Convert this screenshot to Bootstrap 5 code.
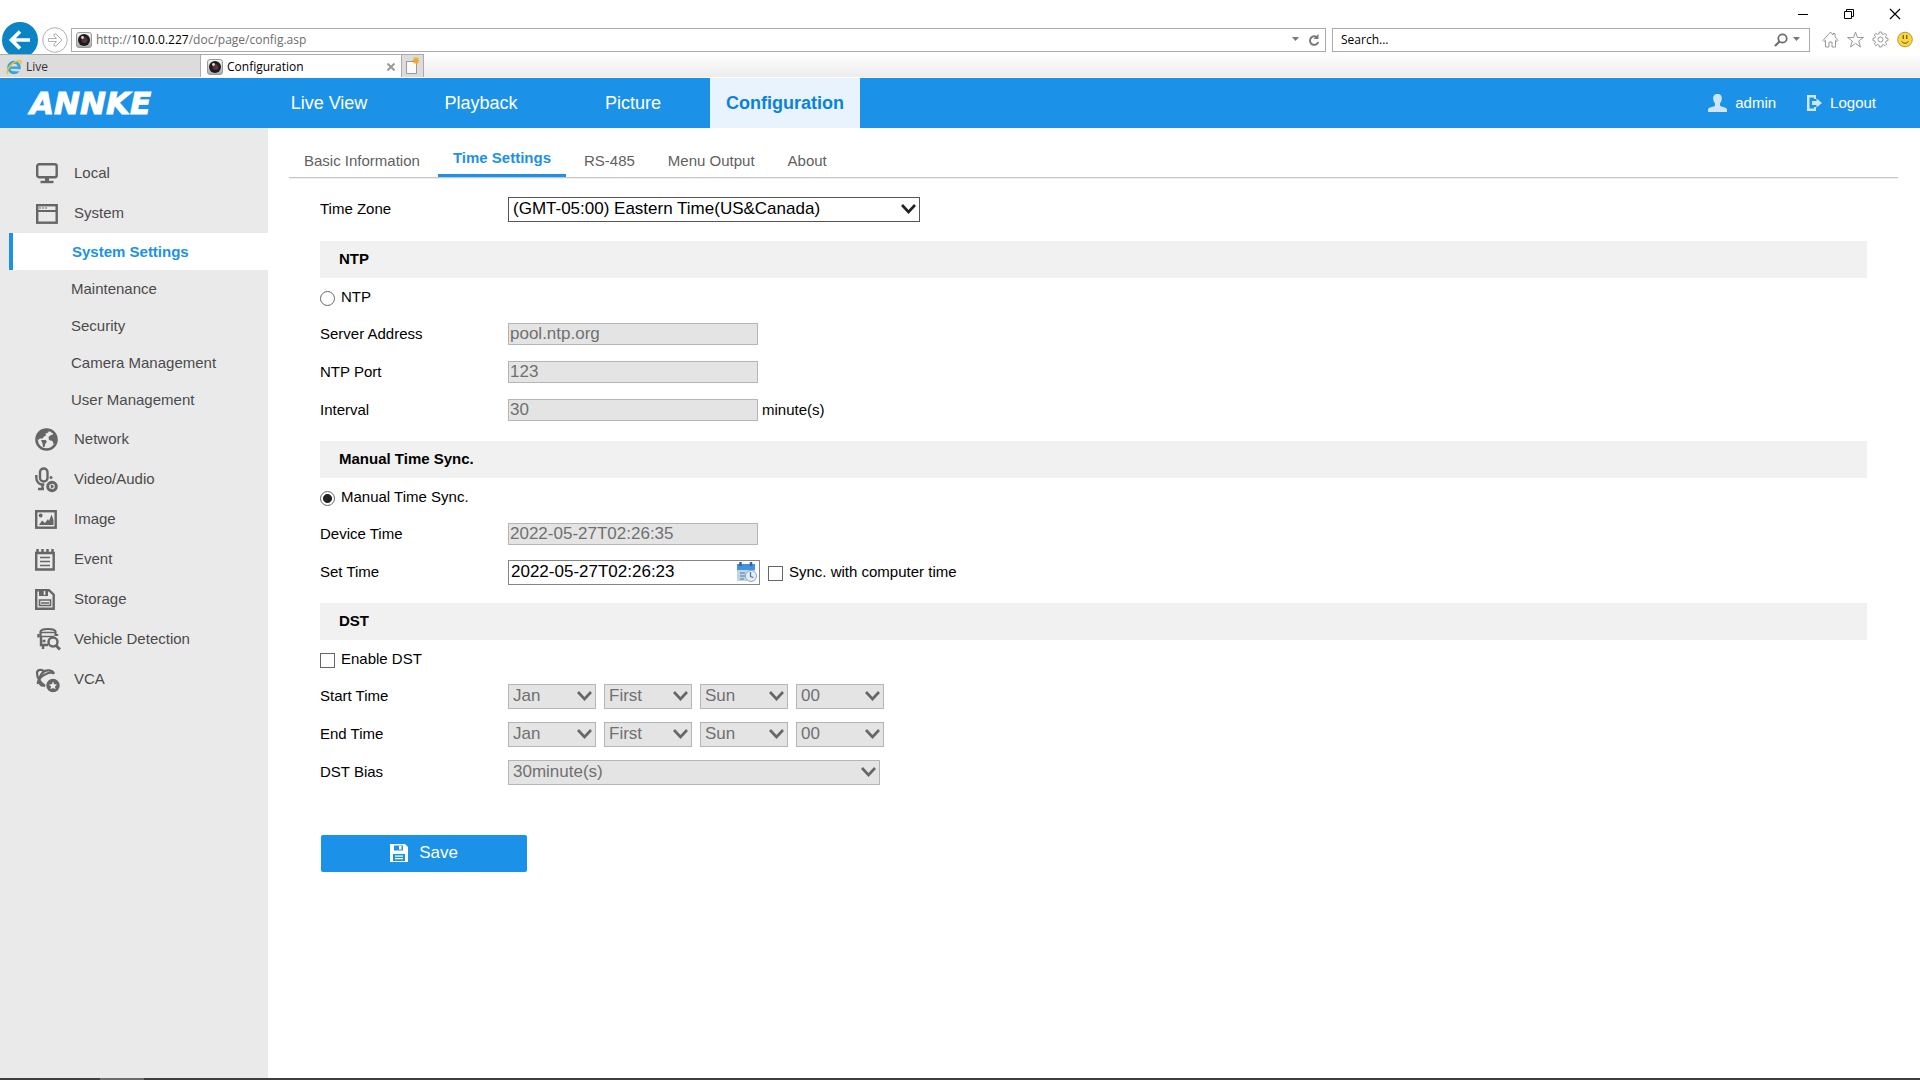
<!DOCTYPE html>
<html lang="en">
<head>
<meta charset="utf-8">
<meta name="viewport" content="width=device-width, initial-scale=1">
<title>Configuration</title>
<link href="https://cdn.jsdelivr.net/npm/bootstrap@5.3.0/dist/css/bootstrap.min.css" rel="stylesheet">
<style>
  :root { --brand: #1b92e8; --ui: "Open Sans", "Noto Sans", sans-serif; }
  body { font: 15px/20px "Liberation Sans", Arial, sans-serif; color: #000; background: #fff; min-height: 100vh; }
  a { text-decoration: none; color: inherit; }
  svg { display: block; flex: none; }
  button { border: 0; background: none; padding: 0; color: inherit; }

  /* browser frame */
  .browser { font: 12px/16px var(--ui); }
  .title-row { height: 24px; padding: 4px 19px 0 0; gap: 34px; }
  .tool-row { height: 30px; padding: 1px 7px 0 2px; }
  .back-btn { width: 36px; height: 36px; margin: -3px 0; }
  .fwd-btn { margin: 0 3px 0 4px; }
  .url-box, .search-box { height: 24px; border: 1px solid #ababab; }
  .url-box { flex: 1; padding: 0 5px 0 4px; color: #6d6d6d; margin-right: 6px; }
  .search-box { width: 478px; padding: 0 8px; margin-right: 12px; }
  .search-box input { border: 0; outline: 0; padding: 0; color: #000; }
  .search-box input::placeholder { color: #000; opacity: 1; }
  .tab-row { height: 24px; border-bottom: 1px solid #fff; background: linear-gradient(#fff, #ececec); z-index: 1; }
  .browser-tab { width: 201px; border: 1px solid #ababab; border-width: 1px 1px 0 0; background: #dcdcdc; color: #333; padding: 2px 6px 0; gap: 4px; }
  .browser-tab.current { background: #fff; color: #000; }
  .new-tab { width: 22px; border: 1px solid #ababab; border-width: 1px 1px 0 0; background: #dcdcdc; }

  /* product header */
  .top-bar { background: var(--brand); height: 50px; color: #fff; }
  .brand-box { width: 254px; padding-left: 30px; }
  .brand-name { font: italic bold 31px/50px "DejaVu Sans", sans-serif; -webkit-text-stroke: 1px #fff; }
  .main-nav { gap: 2px; }
  .main-nav a { width: 150px; line-height: 50px; font-size: 18px; text-align: center; }
  .main-nav a.current { background: #e8f3fd; color: #0a82dc; font-weight: bold; }
  .user-links { padding-right: 44px; gap: 31px; }
  .user-links a { gap: 8px; }

  /* side menu */
  .side { width: 268px; background: #eaeaea; padding-top: 25px; color: #4b4b4b; }
  .side-link { height: 40px; padding-left: 35px; gap: 13px; }
  .side-link svg { margin-top: 2px; color: #666; }
  .sub-menu { padding-bottom: 1px; }
  .sub-menu a { height: 37px; line-height: 37px; margin-left: 9px; padding-left: 58px; border-left: 4px solid transparent; }
  .sub-menu a.current { background: #fff; border-color: var(--brand); color: var(--brand); font-weight: bold; padding-left: 59px; }

  /* page */
  .page { padding: 0 22px 0 21px; }
  .page-tabs { height: 50px; border-bottom: 1px solid #c8c8c8; box-shadow: 0 1px #eee; padding-top: 11px; gap: 3px; color: #5f5f5f; }
  .page-tabs a { padding: 12px 15px 0; height: 38px; border-bottom: 3px solid transparent; }
  .page-tabs a.current { color: var(--brand); font-weight: bold; padding-top: 9px; border-color: var(--brand); }
  .settings { padding: 12px 31px 0; }
  .field-row { height: 38px; }
  .field-row > label:first-child { width: 188px; }
  .section-head { margin: 12px 0 0; height: 37px; background: #f1f1f1; font: bold 15px/36px "Liberation Sans", Arial, sans-serif; padding-left: 19px; }
  .field-row:first-child + .section-head { margin-top: 13px; }
  .pick-row { height: 37px; gap: 6px; }
  .pick { appearance: none; width: 15px; height: 15px; margin: 3px 0 0; border: 1px solid #666; background: #fff; flex: none; }
  .pick[type=radio] { border-radius: 50%; }
  .pick[type=radio]:checked { background: radial-gradient(circle, #222 4px, #fff 5px); }
  .txt, .sel, .time-box { font: 17px/20px "Liberation Sans", Arial, sans-serif; color: #000; border: 1px solid #858585; border-radius: 0; background: #fff; }
  .txt { width: 250px; height: 22px; padding: 0 1px; }
  .txt:disabled, .sel:disabled { background-color: #e4e4e4; color: #707070; border-color: #b5b5b5; opacity: 1; }
  .time-box { width: 252px; height: 25px; padding: 0 2px; }
  .time-box input { border: 0; outline: 0; padding: 0; min-width: 0; }
  .sel { appearance: none; height: 25px; padding: 0 22px 0 4px; background-repeat: no-repeat; background-position: right 3px center;
    background-image: url("data:image/svg+xml,%3Csvg xmlns='http://www.w3.org/2000/svg' width='15' height='11'%3E%3Cpath d='M1 1l6.500 7L14 1' fill='none' stroke='%23222' stroke-width='2.600'/%3E%3C/svg%3E"); }
  .sel:disabled { background-image: url("data:image/svg+xml,%3Csvg xmlns='http://www.w3.org/2000/svg' width='15' height='11'%3E%3Cpath d='M1 1l6.500 7L14 1' fill='none' stroke='%23666' stroke-width='2.600'/%3E%3C/svg%3E"); }
  .zone-sel { width: 412px; border-color: #555; }
  .part-sel { width: 88px; }
  .bias-sel { width: 372px; }
  .save-btn { margin: 44px 0 0 1px; width: 206px; height: 37px; background: var(--brand); border-radius: 2px; color: #fff; font-size: 17px; gap: 11px; padding-bottom: 2px; }

  .task-strip { height: 2px; background: #3e3e3e; padding-left: 100px; }
  .task-strip div { width: 44px; height: 2px; background: #6c6c6c; }
</style>
<script src="https://cdn.jsdelivr.net/npm/bootstrap@5.3.0/dist/js/bootstrap.bundle.min.js"></script>
</head>
<body class="d-flex flex-column">

<svg width="0" height="0" class="position-absolute" aria-hidden="true">
  <defs>
    <linearGradient id="plate" x2="0" y2="1"><stop stop-color="#f6f6f6"/><stop offset="1" stop-color="#a9a9a9"/></linearGradient>
    <symbol id="lens" viewBox="0 0 16 16">
      <rect x=".5" y=".5" width="15" height="15" rx="2.500" fill="url(#plate)" stroke="#999"/>
      <circle cx="8" cy="8" r="6" fill="#1c1c1c"/><circle cx="8.500" cy="8" r="3" fill="#6b2a2a"/><circle cx="9.500" cy="9" r="1.500" fill="#2d4a70"/><circle cx="6.500" cy="5.500" r="1.400" fill="#ddd"/>
    </symbol>
  </defs>
</svg>

<header class="browser">
  <div class="title-row d-flex justify-content-end align-items-center">
    <button aria-label="Minimize"><svg width="12" height="12"><path d="M1 6.500h10" stroke="#000"/></svg></button>
    <button aria-label="Restore"><svg width="12" height="12" fill="none" stroke="#000"><path d="M1.500 3.500h7v7h-7zM3.500 3V1.500h7v7H9"/></svg></button>
    <button aria-label="Close"><svg width="12" height="12"><path d="M1 1l10 10M11 1L1 11" stroke="#000" stroke-width="1.200"/></svg></button>
  </div>
  <div class="tool-row d-flex align-items-center">
    <button class="back-btn" aria-label="Back"><svg width="36" height="36"><circle cx="18" cy="18" r="18" fill="#0a84c4"/><path d="M28 18H10M18 9.500L9.500 18l8.500 8.500" fill="none" stroke="#fff" stroke-width="3.600"/></svg></button>
    <button class="fwd-btn" aria-label="Forward"><svg width="26" height="26" fill="none" stroke="#b2b2b2"><circle cx="13" cy="13" r="12.300"/><path d="M6.500 11.500h8l-2.500-2.500V7h2l6 6-6 6h-2v-2l2.500-2.500h-8z"/></svg></button>
    <div class="url-box d-flex align-items-center">
      <svg width="16" height="16"><use href="#lens"/></svg>
      <span class="ms-1">http://<span class="text-black">10.0.0.227</span>/doc/page/config.asp</span>
      <button class="ms-auto" aria-label="Show addresses"><svg width="8" height="5"><path d="M0 0h7L3.500 4z" fill="#777"/></svg></button>
      <button class="ms-2" aria-label="Refresh"><svg width="12" height="14" fill="none" stroke="#777" stroke-width="2"><path d="M9.500 4.700A4.300 4.300 0 1 0 10.300 9"/><path d="M10.500 1v5h-5z" fill="#777" stroke="none"/></svg></button>
    </div>
    <div class="search-box d-flex align-items-center">
      <input class="flex-fill" type="text" placeholder="Search..." aria-label="Search">
      <button aria-label="Go"><svg width="14" height="14" fill="none" stroke="#6d6d6d" stroke-width="1.800"><circle cx="8.500" cy="5.500" r="4.200"/><path d="M5.500 8.500L1 13" stroke-width="2.200"/></svg></button>
      <button class="ms-1" aria-label="Search options"><svg width="9" height="5"><path d="M1 0h7L4.500 4z" fill="#777"/></svg></button>
    </div>
    <div class="d-flex gap-2">
      <button aria-label="Home"><svg width="17" height="17" fill="none" stroke="#999"><path d="M1 9.500L8.500 1 11 4V2.500h2V6l3 3.500-1 1-1.500-1.200V16H10v-5H7v5H3.500V9.300L2 10.500z"/></svg></button>
      <button aria-label="Favorites"><svg width="17" height="17" fill="none" stroke="#999"><path d="M8.500 1l2 5.500h6L11.700 10l1.800 6-5-3.600-5 3.600 1.800-6L.5 6.500h6z"/></svg></button>
      <button aria-label="Tools"><svg width="17" height="17" fill="none" stroke="#999"><circle cx="8.500" cy="8.500" r="2.500"/><path d="M7.300 1h2.400l.4 2 1.200.5 1.700-1.200 1.700 1.700-1.200 1.700.5 1.200 2 .4v2.400l-2 .4-.5 1.200 1.200 1.700-1.700 1.700-1.700-1.200-1.200.5-.4 2H7.300l-.4-2-1.200-.5L4 14.700 2.300 13l1.200-1.700L3 10.100l-2-.4V7.300l2-.4.5-1.200L2.300 4 4 2.300l1.700 1.200L6.900 3z"/></svg></button>
      <button aria-label="Feedback"><svg width="16" height="17"><circle cx="8" cy="8.500" r="7.300" fill="#fbd63e" stroke="#b79a2c"/><path d="M6.300 4v4M9.700 4v4" stroke="#6d5b1b" stroke-width="1.300"/><path d="M4.500 10.500q3.500 3.500 7 0" fill="none" stroke="#6d5b1b"/></svg></button>
    </div>
  </div>
  <div class="tab-row d-flex position-relative">
    <a href="#" class="browser-tab d-flex align-items-center">
      <svg width="16" height="16" fill="none"><circle cx="8" cy="8.500" r="5.300" stroke="#35a5e0" stroke-width="3"/><path d="M3.500 8.700h10" stroke="#35a5e0" stroke-width="2.400"/><path d="M9.500 11.300h5" stroke="#dcdcdc" stroke-width="2.200"/><path d="M2 15C-1 12 6 2 14 1.500c2 .3 1 2.500.5 3.500" stroke="#f2bf2b" stroke-width="1.500"/></svg>
      <span>Live</span>
    </a>
    <a href="#" class="browser-tab current d-flex align-items-center">
      <svg width="16" height="16"><use href="#lens"/></svg>
      <span>Configuration</span>
      <svg class="ms-auto" width="8" height="8"><path d="M.5.5l7 7M7.500.5l-7 7" stroke="#999" stroke-width="2"/></svg>
    </a>
    <button class="new-tab d-flex align-items-center justify-content-center" aria-label="New tab"><svg width="15" height="18"><path d="M1.500 4.500h10v12h-10z" fill="#fafafa" stroke="#999"/><path d="M11 0v7M7.500 3.500h7M8.500 1l5 5M13.500 1l-5 5" stroke="#f3a71c" stroke-width="1.200"/></svg></button>
  </div>
</header>

<div class="top-bar d-flex">
  <div class="brand-box"><span class="brand-name">ANNKE</span></div>
  <nav class="main-nav d-flex">
    <a href="#">Live View</a><a href="#">Playback</a><a href="#">Picture</a><a href="#" class="current">Configuration</a>
  </nav>
  <div class="user-links d-flex align-items-center ms-auto">
    <a href="#" class="d-flex align-items-center"><svg width="19" height="18" fill="#cfe6fa"><path d="M9.500 0c3 0 4.700 2 4.300 5-.3 2.500-1.300 3.600-1.800 4.500v2c.5 1.500 7 1.500 7 4V18H0v-2.500c0-2.500 6.500-2.500 7-4v-2C6.500 8.600 5.500 7.500 5.200 5 4.800 2 6.500 0 9.500 0z"/></svg>admin</a>
    <a href="#" class="d-flex align-items-center"><svg width="15" height="16" fill="#cfe6fa"><path d="M0 0h9v4H7V2.500H2.500v11H7V12h2v4H0zM5 6h4.500V3.500L15 8l-5.500 4.500V10H5z"/></svg>Logout</a>
  </div>
</div>

<div class="d-flex flex-grow-1">
  <nav class="side flex-shrink-0" aria-label="Settings menu">
    <a href="#" class="side-link d-flex align-items-center"><svg width="26" height="26" fill="none" stroke="currentColor" stroke-width="2.400"><rect x="2.200" y="3.200" width="19.500" height="13" rx="2"/><path d="M12 16v4" stroke-width="4"/><path d="M5.500 21h13" stroke-width="2.400"/></svg>Local</a>
    <a href="#" class="side-link d-flex align-items-center"><svg width="26" height="26" fill="none" stroke="currentColor"><rect x="2.200" y="4.200" width="19.500" height="17.500" stroke-width="2.400"/><path d="M2 10h20" stroke-width="2"/><path d="M4 7h8" stroke-dasharray="2 1"/></svg>System</a>
    <div class="sub-menu d-flex flex-column">
      <a href="#" class="current">System Settings</a>
      <a href="#">Maintenance</a>
      <a href="#">Security</a>
      <a href="#">Camera Management</a>
      <a href="#">User Management</a>
    </div>
    <a href="#" class="side-link d-flex align-items-center"><svg width="26" height="26" fill="currentColor"><circle cx="11.500" cy="12.500" r="10" fill="none" stroke="currentColor" stroke-width="2.600"/><path d="M2 9l3-5 7-2.500L14 4l-1.500 2-2 .5.500 2-2 1-1.500 2H5L3 13zM6 13h4.500l1.500 1.500-1.500 2-1 3.500H8l-.5-3.500zM19 5l3 5v5l-3.500 2-1-3-3.500-1-.5-3 2.500-2 2-.5z"/></svg>Network</a>
    <a href="#" class="side-link d-flex align-items-center"><svg width="26" height="26" fill="none" stroke="currentColor" stroke-width="2.400"><rect x="5" y="1.500" width="7.500" height="13" rx="3.700"/><path d="M1.300 8v3q.5 5 5 6.500h3M7.500 18v4M3 22h6"/><circle cx="16" cy="10.500" r="1.500" fill="currentColor" stroke="none"/><circle cx="17" cy="19.500" r="4.300" stroke-width="3"/><path d="M15.800 17l3.500 2.500-3.500 2.500z" fill="currentColor" stroke="none"/></svg>Video/Audio</a>
    <a href="#" class="side-link d-flex align-items-center"><svg width="26" height="26" fill="currentColor"><rect x="1.200" y="4.200" width="19.500" height="16.500" fill="none" stroke="currentColor" stroke-width="2.400"/><circle cx="5.700" cy="8.500" r="1.900"/><path d="M4 18l3-4.500 3 2.500 3-4 1 2 2.500-6.500L18.500 13v5z"/></svg>Image</a>
    <a href="#" class="side-link d-flex align-items-center"><svg width="26" height="26" fill="none" stroke="currentColor" stroke-width="2.400"><path d="M1.200 6h17.500v16.500H1.200z"/><path d="M2.500 2v4M7.500 2v4M12.500 2v4M17.500 2v4" stroke-width="2.500"/><path d="M5 10.500h10M5 14.500h10M5 18.500h10" stroke-width="1.500"/></svg>Event</a>
    <a href="#" class="side-link d-flex align-items-center"><svg width="26" height="26" fill="none" stroke="currentColor" stroke-width="2.400"><path d="M1.200 3.200H14l4.700 4.500v14H1.200z"/><path d="M4 3h9v6H4z" fill="currentColor" stroke="none"/><path d="M9.500 4v4" stroke="#eaeaea" stroke-width="1.600"/><path d="M4.500 18.500V13h11v5.500zM6 16h8" stroke-width="1.600"/></svg>Storage</a>
    <a href="#" class="side-link d-flex align-items-center"><svg width="26" height="26" fill="none" stroke="currentColor" stroke-width="2.400"><path d="M5.500 9V4.500Q6 2 13 2t7.500 2.500V9" stroke-width="2.200"/><path d="M6 5.500h14M6 9.500h13" stroke-width="1.600"/><path d="M3.500 7v3.500M6 9v9h7M8 18v4"/><path d="M7.500 14h3M22 7v2"/><circle cx="18" cy="15" r="4.500"/><path d="M21 18.500l4 4" stroke-width="3"/></svg>Vehicle Detection</a>
    <a href="#" class="side-link d-flex align-items-center"><svg width="26" height="26" fill="none" stroke="currentColor" stroke-width="2.200"><path d="M19 6C17 3 12 2.500 9 4.500c-4 3-6 8-4 12.500 1 2 3 2 5 1.500"/><path d="M9 4C5 2 2 3 2 6c0 5 4 10 8 13M3 17c-1-3 3-8 8-10 3-1.500 7-2 8 0" /><circle cx="18" cy="18.500" r="6.700" fill="currentColor" stroke="none"/><path d="M18 14.500l1.200 2.700 2.800.3-2 2 .5 2.800-2.500-1.400-2.500 1.400.5-2.800-2-2 2.800-.3z" fill="#eaeaea" stroke="none"/></svg>VCA</a>
  </nav>

  <main class="page flex-grow-1">
    <nav class="page-tabs d-flex" aria-label="System settings pages">
      <a href="#">Basic Information</a><a href="#" class="current">Time Settings</a><a href="#">RS-485</a><a href="#">Menu Output</a><a href="#">About</a>
    </nav>

    <form class="settings" onsubmit="return false">
      <div class="field-row d-flex align-items-center">
        <label for="zone">Time Zone</label>
        <select id="zone" class="sel zone-sel"><option>(GMT-05:00) Eastern Time(US&amp;Canada)</option></select>
      </div>

      <h2 class="section-head">NTP</h2>
      <div class="pick-row d-flex align-items-center">
        <input class="pick" type="radio" name="mode" id="modeNtp"><label for="modeNtp">NTP</label>
      </div>
      <div class="field-row d-flex align-items-center">
        <label for="server">Server Address</label><input class="txt" id="server" type="text" value="pool.ntp.org" disabled>
      </div>
      <div class="field-row d-flex align-items-center">
        <label for="port">NTP Port</label><input class="txt" id="port" type="text" value="123" disabled>
      </div>
      <div class="field-row d-flex align-items-center">
        <label for="interval">Interval</label><input class="txt" id="interval" type="text" value="30" disabled><span class="ms-1">minute(s)</span>
      </div>

      <h2 class="section-head">Manual Time Sync.</h2>
      <div class="pick-row d-flex align-items-center">
        <input class="pick" type="radio" name="mode" id="modeManual" checked><label for="modeManual">Manual Time Sync.</label>
      </div>
      <div class="field-row d-flex align-items-center">
        <label for="deviceTime">Device Time</label><input class="txt" id="deviceTime" type="text" value="2022-05-27T02:26:35" disabled>
      </div>
      <div class="field-row d-flex align-items-center">
        <label for="setTime">Set Time</label>
        <div class="time-box d-flex align-items-center">
          <input class="flex-fill" id="setTime" type="text" value="2022-05-27T02:26:23">
          <button type="button" aria-label="Pick a date"><svg width="20" height="20"><rect y="2" width="18" height="17" rx="1" fill="#c3d3e2"/><path d="M0 2h18v6H0z" fill="#3c93e0"/><path d="M3.500 0v4M14 0v4" stroke="#3f6285" stroke-width="2.500"/><path d="M3 11h5M3 14h5M3 17h4" stroke="#6f9dbb" stroke-width="1.600"/><circle cx="14" cy="14" r="5.500" fill="#e8edf3" stroke="#93a7bb"/><path d="M13.500 10v4.500l3 1" fill="none" stroke="#4b79b5" stroke-width="1.300"/></svg></button>
        </div>
        <span class="pick-row d-flex align-items-center ms-2">
          <input class="pick" type="checkbox" id="syncPc"><label for="syncPc">Sync. with computer time</label>
        </span>
      </div>

      <h2 class="section-head">DST</h2>
      <div class="pick-row d-flex align-items-center">
        <input class="pick" type="checkbox" id="dst"><label for="dst">Enable DST</label>
      </div>
      <div class="field-row d-flex align-items-center">
        <label for="startMonth">Start Time</label>
        <div class="d-flex gap-2">
          <select id="startMonth" class="sel part-sel" disabled><option>Jan</option></select>
          <select class="sel part-sel" aria-label="Start week" disabled><option>First</option></select>
          <select class="sel part-sel" aria-label="Start day" disabled><option>Sun</option></select>
          <select class="sel part-sel" aria-label="Start hour" disabled><option>00</option></select>
        </div>
      </div>
      <div class="field-row d-flex align-items-center">
        <label for="endMonth">End Time</label>
        <div class="d-flex gap-2">
          <select id="endMonth" class="sel part-sel" disabled><option>Jan</option></select>
          <select class="sel part-sel" aria-label="End week" disabled><option>First</option></select>
          <select class="sel part-sel" aria-label="End day" disabled><option>Sun</option></select>
          <select class="sel part-sel" aria-label="End hour" disabled><option>00</option></select>
        </div>
      </div>
      <div class="field-row d-flex align-items-center">
        <label for="bias">DST Bias</label>
        <select id="bias" class="sel bias-sel" disabled><option>30minute(s)</option></select>
      </div>

      <button class="save-btn d-flex align-items-center justify-content-center" type="submit"><svg width="18" height="18" fill="#fff"><path fill-rule="evenodd" d="M0 0h15l3 3v15H0zM4 1.500h9v5H4zM3 10h12v7H3z"/><path d="M9 2h2.500v3.500H9z"/><path d="M5 11.500h8v1.300H5zM5 14h8v1.300H5z"/></svg>Save</button>
    </form>
  </main>
</div>

<footer class="task-strip"><div></div></footer>
</body>
</html>
